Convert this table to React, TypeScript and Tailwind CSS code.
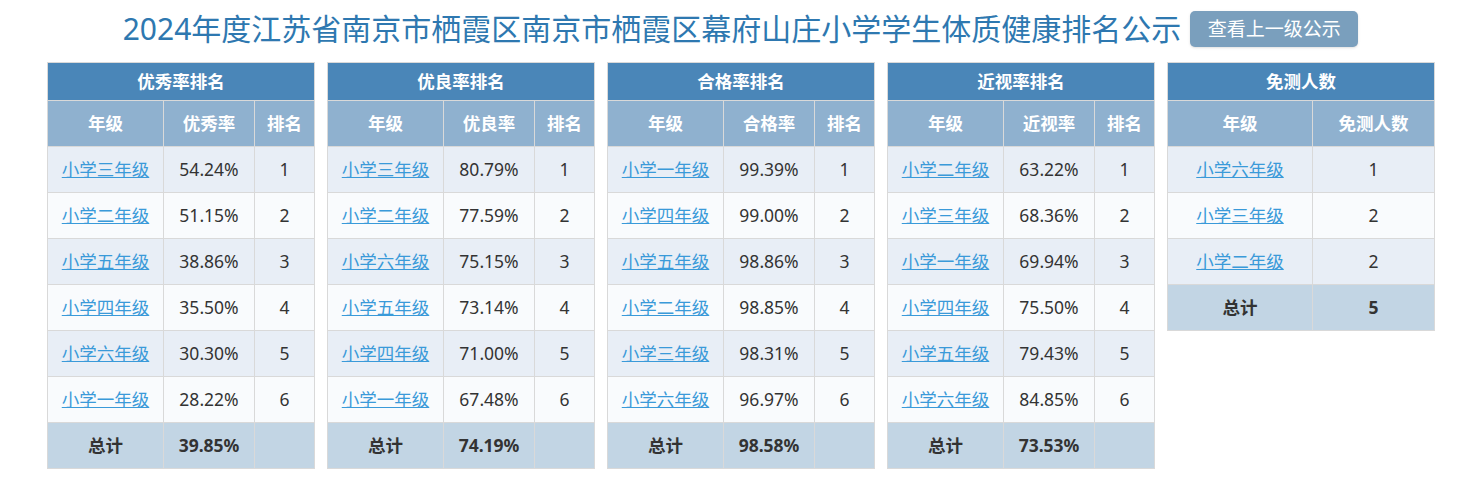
const tables = [
  {
    title: "优秀率排名",
    metric: "优秀率",
    rows: [
      ["小学三年级", "54.24%", "1"],
      ["小学二年级", "51.15%", "2"],
      ["小学五年级", "38.86%", "3"],
      ["小学四年级", "35.50%", "4"],
      ["小学六年级", "30.30%", "5"],
      ["小学一年级", "28.22%", "6"],
    ],
    total: "39.85%",
  },
  {
    title: "优良率排名",
    metric: "优良率",
    rows: [
      ["小学三年级", "80.79%", "1"],
      ["小学二年级", "77.59%", "2"],
      ["小学六年级", "75.15%", "3"],
      ["小学五年级", "73.14%", "4"],
      ["小学四年级", "71.00%", "5"],
      ["小学一年级", "67.48%", "6"],
    ],
    total: "74.19%",
  },
  {
    title: "合格率排名",
    metric: "合格率",
    rows: [
      ["小学一年级", "99.39%", "1"],
      ["小学四年级", "99.00%", "2"],
      ["小学五年级", "98.86%", "3"],
      ["小学二年级", "98.85%", "4"],
      ["小学三年级", "98.31%", "5"],
      ["小学六年级", "96.97%", "6"],
    ],
    total: "98.58%",
  },
  {
    title: "近视率排名",
    metric: "近视率",
    rows: [
      ["小学二年级", "63.22%", "1"],
      ["小学三年级", "68.36%", "2"],
      ["小学一年级", "69.94%", "3"],
      ["小学四年级", "75.50%", "4"],
      ["小学五年级", "79.43%", "5"],
      ["小学六年级", "84.85%", "6"],
    ],
    total: "73.53%",
  },
];

const exempt = [
  ["小学六年级", "1"],
  ["小学三年级", "2"],
  ["小学二年级", "2"],
];

const cell = "border border-[#d9d9d9] text-center p-0";
const rowBg = (i: number) => (i % 2 === 0 ? "bg-[#e8eef6]" : "bg-[#f9fbfd]");

function RankTable({ t }: { t: (typeof tables)[number] }) {
  return (
    <table className="w-[267px] border-collapse table-fixed">
      <colgroup>
        <col className="w-[116px]" />
        <col className="w-[91px]" />
        <col className="w-[60px]" />
      </colgroup>
      <thead>
        <tr className="h-[38px] bg-[#4a86b8] text-white font-bold">
          <th colSpan={3} className={cell}>
            {t.title}
          </th>
        </tr>
        <tr className="h-[46px] bg-[#8fb1cf] text-white font-bold">
          <th className={cell}>年级</th>
          <th className={cell}>{t.metric}</th>
          <th className={cell}>排名</th>
        </tr>
      </thead>
      <tbody>
        {t.rows.map((r, i) => (
          <tr key={r[0]} className={`h-[46px] ${rowBg(i)}`}>
            <td className={cell}>
              <a href="#" className="text-[#3a9ad9] underline">
                {r[0]}
              </a>
            </td>
            <td className={cell}>{r[1]}</td>
            <td className={cell}>{r[2]}</td>
          </tr>
        ))}
        <tr className="h-[46px] bg-[#c2d5e4] font-bold">
          <td className={cell}>总计</td>
          <td className={cell}>{t.total}</td>
          <td className={cell}></td>
        </tr>
      </tbody>
    </table>
  );
}

function ExemptTable() {
  return (
    <table className="w-[267px] border-collapse table-fixed self-start">
      <colgroup>
        <col className="w-[145px]" />
        <col className="w-[122px]" />
      </colgroup>
      <thead>
        <tr className="h-[38px] bg-[#4a86b8] text-white font-bold">
          <th colSpan={2} className={cell}>
            免测人数
          </th>
        </tr>
        <tr className="h-[46px] bg-[#8fb1cf] text-white font-bold">
          <th className={cell}>年级</th>
          <th className={cell}>免测人数</th>
        </tr>
      </thead>
      <tbody>
        {exempt.map((r, i) => (
          <tr key={r[0]} className={`h-[46px] ${rowBg(i)}`}>
            <td className={cell}>
              <a href="#" className="text-[#3a9ad9] underline">
                {r[0]}
              </a>
            </td>
            <td className={cell}>{r[1]}</td>
          </tr>
        ))}
        <tr className="h-[46px] bg-[#c2d5e4] font-bold">
          <td className={cell}>总计</td>
          <td className={cell}>5</td>
        </tr>
      </tbody>
    </table>
  );
}

export default function App() {
  return (
    <div className="w-[1467px] h-[487px] bg-white text-[#333] text-[17.5px] font-['Noto_Sans','Noto_Sans_CJK_SC',sans-serif]">
      <div className="flex items-center justify-center gap-[9px] pt-[11px] pl-[14px]">
        <h1 className="text-[30px] leading-[36px] text-[#2e78b0]">
          2024年度江苏省南京市栖霞区南京市栖霞区幕府山庄小学学生体质健康排名公示
        </h1>
        <button className="h-[36px] w-[168px] rounded-[5px] bg-[#7a9fbd] text-white text-[19px] shadow-sm">
          查看上一级公示
        </button>
      </div>
      <div className="flex gap-[12px] pl-[47px] pt-[15px]">
        {tables.map((t) => (
          <RankTable key={t.title} t={t} />
        ))}
        <ExemptTable />
      </div>
    </div>
  );
}
